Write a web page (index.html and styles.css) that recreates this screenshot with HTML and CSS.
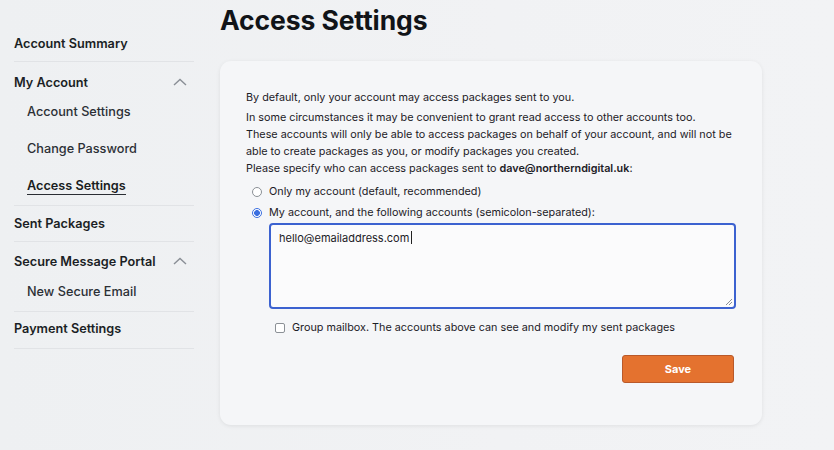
FILE: index.html
```html
<!DOCTYPE html>
<html>
<head>
<meta charset="utf-8">
<link rel="stylesheet" href="styles.css">
</head>
<body>
<div class="page">
  <nav class="sidebar">
    <div class="nav-item first">Account Summary</div>
    <div class="nav-group">
      <div class="nav-head">My Account
        <svg class="chev" width="14" height="8" viewBox="0 0 14 8"><path d="M1 7 L7 1.5 L13 7" fill="none" stroke="#8a8f96" stroke-width="1.4"/></svg>
      </div>
      <div class="sub">Account Settings</div>
      <div class="sub">Change Password</div>
      <div class="sub active"><span>Access Settings</span></div>
    </div>
    <div class="nav-item sent">Sent Packages</div>
    <div class="nav-group">
      <div class="nav-head second">Secure Message Portal
        <svg class="chev" width="14" height="8" viewBox="0 0 14 8"><path d="M1 7 L7 1.5 L13 7" fill="none" stroke="#8a8f96" stroke-width="1.4"/></svg>
      </div>
      <div class="sub">New Secure Email</div>
    </div>
    <div class="nav-item pay">Payment Settings</div>
  </nav>
  <main class="main">
    <h1 class="title">Access Settings</h1>
    <section class="card">
      <p class="p1">By default, only your account may access packages sent to you.</p>
      <p class="p2">In some circumstances it may be convenient to grant read access to other accounts too.<br>These accounts will only be able to access packages on behalf of your account, and will not be able to create packages as you, or modify packages you created.</p>
      <p class="p3">Please specify who can access packages sent to <b>dave@northerndigital.uk</b>:</p>
      <label class="opt"><span class="radio"></span>Only my account (default, recommended)</label>
      <label class="opt"><span class="radio on"></span>My account, and the following accounts (semicolon-separated):</label>
      <div class="ta">hello@emailaddress.com<span class="caret"></span>
        <svg class="grip" width="8" height="8" viewBox="0 0 8 8"><path d="M7 1 L1 7 M7 4 L4 7" stroke="#8a8f96" stroke-width="1"/></svg>
      </div>
      <label class="chk"><span class="box"></span>Group mailbox. The accounts above can see and modify my sent packages</label>
      <div class="actions"><button class="save">Save</button></div>
    </section>
  </main>
</div>
</body>
</html>
```
FILE: styles.css
```css
* { box-sizing: border-box; }
html, body { margin: 0; padding: 0; }
body {
  width: 834px; height: 450px; overflow: hidden;
  background: linear-gradient(90deg, #eef0f2 0%, #f1f2f4 60%, #f2f3f5 100%);
  font-family: Inter, "Noto Sans", sans-serif;
  color: #1d2127;
}
.page { display: flex; }
.sidebar { width: 180px; margin-left: 14px; padding-top: 25px; }
.nav-item, .nav-head {
  font-size: 12.7px; font-weight: 600; color: #1b1f25; line-height: 17px;
}
.nav-item { height: 37px; padding-top: 10px; border-bottom: 1px solid #e1e3e6; }
.nav-item.sent { height: 36px; padding-top: 9px; }
.nav-item.pay { height: 37px; padding-top: 8px; }
.nav-group { border-bottom: 1px solid #e1e3e6; padding-bottom: 1px; }
.nav-head { display: flex; justify-content: space-between; align-items: center; height: 31px; padding-top: 10px; padding-right: 7px; }
.nav-head.second { padding-top: 8px; }
.nav-head .chev { margin-top: -2px; }
.sub { font-size: 12.7px; font-weight: 500; color: #2b2f35; padding-left: 13px; height: 37px; line-height: 17px; padding-top: 10px; }
.sub.active span { font-weight: 600; color: #1a1d22; border-bottom: 1.5px solid #2a2d33; padding-bottom: 1px; }
.main { margin-left: 26px; }
.title { margin: 4px 0 0 0; font-size: 26.5px; font-weight: 700; letter-spacing: -0.1px; color: #111418; height: 33px; line-height: 33px; }
.card {
  margin-top: 24px; width: 542px; height: 364px;
  background: #f5f6f8; border-radius: 11px;
  box-shadow: 0 1px 4px rgba(0,0,0,0.08);
  padding: 28px 26px 0 26px;
  font-size: 10.8px; line-height: 17px; color: #1c2026;
}
.card p { margin: 0; }
.p1 { margin-bottom: 3px !important; }
.p2 { margin-bottom: 0 !important; }
.p3 { margin-bottom: 4px !important; }
.card b { font-weight: 600; }
.opt { display: flex; align-items: center; height: 21px; padding-left: 6px; }
.radio { width: 10px; height: 10px; border-radius: 50%; border: 1px solid #8b9096; background: #fff; margin-right: 7px; }
.radio.on { border: 1px solid #3b6fe0; background: radial-gradient(circle, #3b6fe0 0 2.6px, #fff 3.2px); }
.ta {
  position: relative; margin: 0 0 0 23px; width: 467px; height: 86px;
  background: #fbfbfc; border: 2px solid #3c62d0; border-radius: 4px;
  padding: 5px 8px; font-size: 11px; line-height: 17px;
}
.caret { display: inline-block; width: 1px; height: 13px; background: #222; margin-left: 2px; vertical-align: -2px; }
.grip { position: absolute; right: 1px; bottom: 1px; }
.chk { display: flex; align-items: center; margin: 10px 0 0 29px; height: 17px; }
.box { width: 10px; height: 10px; border: 1px solid #8b9096; border-radius: 2px; background: #fff; margin-right: 7px; }
.actions { display: flex; justify-content: flex-end; margin-top: 19px; padding-right: 2px; }
.save {
  width: 112px; height: 28px; background: #e4722f; border: 1px solid #b9592a; border-radius: 3px;
  color: #fff; font-family: Inter, sans-serif; font-weight: 700; font-size: 11px;
}
```
